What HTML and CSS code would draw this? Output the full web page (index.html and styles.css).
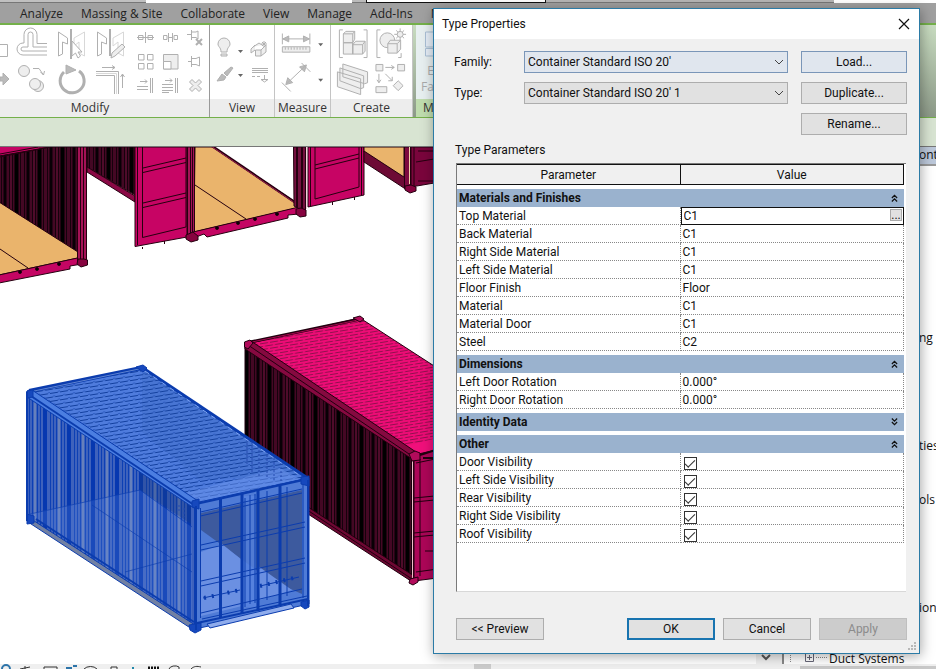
FILE: index.html
```html
<!DOCTYPE html>
<html lang="en">
<head>
<meta charset="utf-8">
<title>Type Properties</title>
<link rel="stylesheet" href="styles.css">
</head>
<body>
<div class="app">
  <div class="titlestrip"><span class="strip-grey"></span><span class="strip-white"></span><span class="strip-tab"></span><span class="strip-box"></span><span class="strip-grey-wide"></span><span class="strip-end"></span></div>
  <nav class="tabs">
    <a href="#">Analyze</a><a href="#">Massing &amp; Site</a><a href="#">Collaborate</a><a href="#">View</a><a href="#">Manage</a><a href="#">Add-Ins</a><a href="#">M</a>
  </nav>
  <div class="ribbon">
    <section class="panel panel-modify">
      <div class="tools modify-tools">
        <svg class="edge" viewBox="0 0 12 72"><path d="M0 19.500H7.500V31.500H0"/><path class="solid" d="M0 52H3V48L9 54L3 60V56H0Z"/></svg>
        <div class="big-grid">
          <svg viewBox="0 0 34 36"><path d="M31 18.500H21V9.500A6.500 6.500 0 0 0 8 9.500V18H7A6 6 0 0 0 7 30H31M31 22H17V9.500A2.500 2.500 0 0 0 12 9.500V22H7A2 2 0 0 0 7 26H31"/></svg>
          <svg viewBox="0 0 34 36"><path d="M3.500 7V31L7.500 29V17L12.500 19V13Z"/><path class="pale" d="M29.500 7V31L24 28V17L19 21V13Z"/><path class="thick" d="M16 4V34"/><path class="paper" d="M17 16V31L20.500 28L23 33L25.500 31L23 27H27Z"/></svg>
          <svg viewBox="0 0 34 36"><path d="M3.500 7V31L7.500 29V17L12.500 19V13Z"/><path class="pale" d="M29.500 7V31L24 28V17L19 21V13Z"/><path class="thick" d="M16 4V31"/><path class="tint" d="M17 33L18 28L28 19L31 22L21 31Z"/></svg>
          <svg viewBox="0 0 34 36"><circle class="tint" cx="8" cy="9" r="5.500"/><circle class="tint" cx="22" cy="24" r="5.500"/><circle class="tint" cx="19" cy="22" r="5.500"/><path d="M17 6.500H23L27.500 13M24.500 10L27.500 13L28.500 9"/></svg>
          <svg viewBox="0 0 34 36"><path class="ring" d="M9 10A12 12 0 1 0 24 9"/><path class="solid" d="M11 3L21 8L11 12Z"/></svg>
          <svg viewBox="0 0 34 36"><path d="M8 5.500H21M18 3.500L21 5.500L18 7.500M2 9.500H24.500V32M2 13.500H20.500V32M28.500 26V12M26.500 15L28.500 12L30.500 15"/><path class="pale" d="M2 11.500H22.500V32"/></svg>
        </div>
        <div class="small-grid">
          <svg viewBox="0 0 18 18"><path d="M1.500 6.500H6V10.500H1.500ZM11 6.500H15.500V10.500H11ZM8.500 3V14M0 8.500H17"/></svg>
          <svg viewBox="0 0 18 18"><path d="M1.500 6.500H5V10.500H1.500ZM12 6.500H15.500V10.500H12ZM6.500 4V13M10.500 4V13M6 8.500H11"/></svg>
          <svg viewBox="0 0 18 18"><path d="M0 5.500H4M4.500 1V11M4.500 3H9L11 2V10L9 8.500H4.500"/><path class="thick" d="M9 10L15 16M15 10L9 16"/></svg>
          <svg viewBox="0 0 18 18"><path d="M1.500 1.500H7V7H1.500ZM10.500 1.500H16V7H10.500ZM1.500 10.500H7V16H1.500ZM10.500 10.500H16V16H10.500Z"/></svg>
          <svg viewBox="0 0 18 18"><path class="tint" d="M1.500 1.500H16V16H1.500Z"/><path class="paper" d="M1.500 8.500H9V16H1.500Z"/></svg>
          <svg viewBox="0 0 18 18"><path d="M1 8.500H4M4.500 3V14M4.500 5.500H9L12.500 4V13L9 11.500H4.500"/></svg>
          <svg viewBox="0 0 18 18"><path d="M3 4.500H10M8 2.500L10 4.500L8 6.500M13.500 1V16M15.500 1V16M0 9.500H11M0 12.500H11"/></svg>
          <svg viewBox="0 0 18 18"><path d="M3 3.500H10M8 1.500L10 3.500L8 5.500M13.500 1V16M15.500 1V16M0 7.500H11M0 10.500H11M0 13.500H11M0 15.500H7"/></svg>
          <svg viewBox="0 0 18 18"><path class="tint" d="M2.500 5L5 2.500L8.500 6L12 2.500L14.500 5L11 8.500L14.500 12L12 14.500L8.500 11L5 14.500L2.500 12L6 8.500Z"/></svg>
        </div>
      </div>
      <h2>Modify</h2>
    </section>
    <section class="panel panel-view">
      <div class="tools">
        <svg class="fill" viewBox="0 0 64 72"><path class="tint" d="M11 27C11 22 8 22 8 19A6 6 0 0 1 20 19C20 22 17 22 17 27ZM11 29H17V31H11Z"/><path class="arrow" d="M28 25H33L30.500 28Z"/><path class="tint" d="M45.500 25V31H51V25ZM45 25L41 28V24L45 20M51 25L56 20V27L51 31M43 22L49 18L52 20"/><path d="M54 16V22M51 19H57M52 17L56 21M56 17L52 21"/><path class="solid" d="M7 56L12 49L16 52L14 55ZM14 48L21 42L23 43L17 51Z"/><path class="arrow" d="M28 49H33L30.500 52Z"/><path d="M42 43.500H58M42 47.500H58M42 45.500H58M42 51.500H45M47 51.500H50M54.500 50V54M51 54.500H58L54.500 57Z"/></svg>
      </div>
      <h2>View</h2>
    </section>
    <section class="panel panel-measure">
      <div class="tools">
        <svg class="fill" viewBox="0 0 56 72"><path d="M8 13.500H35M7.500 8V19M35.500 8V19"/><path class="solid" d="M8 13.500L14 10.500V16.500ZM35 13.500L29 10.500V16.500ZM11 60L13 53L18 58ZM32 40L25 42L30 47Z"/><path class="tint" d="M7.500 21.500H35.500V27H7.500ZM10.500 22V24.500M13.500 22V24.500M16.500 22V24.500M19.500 22V24.500M22.500 22V24.500M25.500 22V24.500M28.500 22V24.500M31.500 22V24.500"/><path class="arrow" d="M44 18H49L46.500 21ZM44 54H49L46.500 57Z"/><path d="M12 59L31 41M7 58L16 67M27 38L36 47"/></svg>
      </div>
      <h2>Measure</h2>
    </section>
    <section class="panel panel-create">
      <div class="tools">
        <svg class="fill" viewBox="0 0 82 72"><path d="M12 4.500H8.500V32.500H12M33 4.500H36.500V32.500H33M50 4.500H46.500V32.500H50M71 28V32.500H68"/><path class="tint" d="M12.500 8.500L15 6H24V14L22 17.500H12.500ZM12.500 17.500H22V29H12.500ZM22 19.500L25 16H34.500V26L32 29H22Z"/><path d="M12.500 8.500H22V29M22 19.500H32V29M22 8.500L24 6M32 19.500L34.500 16"/><circle class="tint" cx="57" cy="15" r="7.500"/><path class="tint" d="M57.500 18.500L60 15H70.500V24L67 28H57.500ZM57.500 18.500H67V28M67 18.500L70.500 15"/><path d="M70 3V15M64 9H76M66 5L74 13M74 5L66 13"/><circle class="tint" cx="70" cy="9" r="3"/><path class="tint" d="M12 39L37 47V58L34 59L12 52ZM9 43L33 51V63L30 64L9 56ZM6.500 47L30 54V70L6.500 62Z"/><path class="tint" d="M45.500 39.500H52.500V46H45.500ZM67.500 39.500H74.500V46H67.500ZM45.500 62H56.500V68H45.500ZM68 56L73 61L68 66L63 61Z"/><path d="M55 42.500H64M61 40.500L64 42.500L61 44.500M48.500 49V58M46.500 55L48.500 58L50.500 55M55 49L62 56M62 52V56H58"/></svg>
      </div>
      <h2>Create</h2>
    </section>
    <section class="panel panel-mode">
      <div class="tools"><svg class="fill" viewBox="0 0 24 72"><path class="bluish" d="M9.500 7H24V22H9.500ZM9.500 23.500H24V31H9.500Z"/></svg><span class="mode-label">E<br>Fa</span></div>
      <h2>M</h2>
    </section>
  </div>
  <div class="optionsbar"></div>

  <div class="workspace">
    <main class="viewport">
      <svg class="model" viewBox="0 147 782 517" preserveAspectRatio="xMinYMin slice" role="img" aria-label="Shipping containers">
        <defs>
          <pattern id="dark" width="23" height="40" patternUnits="userSpaceOnUse"><rect width="23" height="40" fill="#440824"/><path d="M1.500 0V40M9.500 0V40M12.500 0V40M20.500 0V40" stroke="#16020c"/><path d="M5 0V40" stroke="#080005" stroke-width="3"/><path d="M16.500 0V40" stroke="#000" stroke-width="4"/><path d="M11 0V40" stroke="#571030"/></pattern>
          <pattern id="bluewall" width="24" height="40" patternUnits="userSpaceOnUse"><rect width="24" height="40" fill="#3e62bc"/><path d="M2.500 0V40M5.500 0V40M8.500 0V40M13.500 0V40M16.500 0V40" stroke="#0c3fb4"/><path d="M21 0V40" stroke="#0638b0" stroke-width="4"/><path d="M11 0V40" stroke="#6680bb" stroke-width="2"/></pattern>
          <pattern id="blueroof" width="10" height="8" patternUnits="userSpaceOnUse" patternTransform="matrix(1 -.16 0 1 0 0)"><rect width="10" height="8" fill="#4f7cdd"/><path d="M0 1.500H8M0 5.500H3M5 5.500H10" stroke="#123f9e"/><path d="M8 .5H10M3 4.500H5" stroke="#2a59c1"/></pattern>
          <pattern id="pinkroof" width="10" height="6" patternUnits="userSpaceOnUse" patternTransform="matrix(1 -.16 0 1 0 0)"><rect width="10" height="6" fill="#ee0c76"/><path d="M0 1.500H8M0 4.500H3M5 4.500H10" stroke="#92104e"/></pattern>
        </defs>
        <!-- open containers along the top edge -->
        <g stroke="#25000f" stroke-width="1">
          <path fill="#c40563" d="M-1 147H78V160L-1 157Z"/>
          <path fill="url(#dark)" d="M-1 156L50 147H78V254L-1 202Z"/>
          <path fill="#c40563" stroke="none" d="M0 147H40L0 155Z"/><path d="M0 154L38 147M0 157L50 147" fill="none"/>
          <path fill="#eab46c" d="M-1 202L78 252V258L-1 275Z"/><path d="M0 249L28 268" fill="none"/>
          <path fill="#c40563" d="M-1 275L82 257V264L70 266V269L-1 283Z"/>
          <path fill="#a51256" d="M77.500 147H86.500V262H77.500Z"/><path d="M80.500 147V262M83.500 147V262"/>
          <path fill="#86033f" d="M78 259H84L87.500 260V265L81 267L77 264Z"/>
          <circle cx="20" cy="272" r="1.500"/><circle cx="37" cy="269" r="1.500"/><circle cx="59" cy="264" r="1.500"/>
          <path fill="url(#dark)" d="M87 147H135V195L87 167Z"/><path fill="#8a0945" d="M87 167L135 196V202L87 172Z"/>
          <path fill="#c70464" d="M135 147H187V237L135 246.500Z"/><path fill="none" d="M137.500 147V245M142.500 147V237.500L186 227V147M143 168L186 158M143 172.500L186 162.500M143 203L186 193M143 207.500L186 197.500M142.500 247V249M164.500 241V244"/>
          <path fill="#eab46c" d="M195 147H213L297 203V208L194 232Z"/><path d="M195 185L246 219" fill="none"/>
          <path stroke-width="2.500" d="M212 146L296 203" fill="none"/><path d="M211 146L295 203" fill="none" stroke="#9a1b4d"/>
          <path fill="#a51256" d="M187.500 147H194.500V235H187.500Z"/><path d="M190.500 147V235M192.500 147V235"/>
          <path fill="#c40563" d="M193 232L299 207V214L288 215V218L207 237L204 234L196 237Z"/>
          <circle cx="217" cy="228" r="1.500"/><circle cx="238" cy="223" r="1.500"/><circle cx="255" cy="219" r="1.500"/><circle cx="277" cy="214" r="1.500"/>
          <path fill="#86033f" d="M186 235L193 232L198 236V240L191 242L186 239Z"/>
          <path fill="#751040" d="M293.500 147H305.500V212L294 206Z"/><path stroke-width="2" d="M297 147V208M302 147V211"/><path stroke="#f3cdd9" d="M306.500 147V209"/>
          <path fill="#86033f" d="M296 209L301 208L306 210V216L300 217L296 214Z"/>
          <path fill="#c70464" d="M308 147H364V195L308 207Z"/><path fill="none" d="M310.500 147V206M315 147V199L359 187V147M315 165L359 154M315 169L359 158M332.500 202V205M354.500 197V200"/><path d="M361.500 147V195"/>
          <path fill="#eab46c" d="M364 147H404V178L364 152Z"/><path fill="#6d0a35" d="M364 151L407 179V190L364 162Z"/>
          <path fill="#7d0a40" d="M404.500 147H410.500V188H404.500Z"/><path fill="#7a053c" d="M411 147H440V182L411 187Z"/><path d="M414 147V186M418 151H440M416 162L440 158M418 181H440" fill="none"/><path stroke="#efd1a7" d="M409.500 147V184"/>
          <path fill="#86033f" d="M405 186L411 185L416 187V191L410 193L405 190Z"/>
        </g>
        <!-- closed container -->
        <g stroke="#21000f">
          <path fill="url(#pinkroof)" d="M246 344L360 318L445 373V454L414 455Z"/>
          <path fill="#f0107b" stroke="none" d="M402 447L445 436V452L414 455Z"/>
          <path fill="none" stroke-width="3" d="M250 342L360 319"/><path fill="none" stroke="#a60850" d="M252 342L358 320"/>
          <path fill="url(#dark)" d="M245 345L414 456V581L245 472Z"/>
          <path fill="#860940" d="M245 343L251 341L416 452V459L412 459L245 349Z"/><path fill="none" d="M248 345L412 456"/>
          <path fill="#6d0732" d="M245 466L414 576V583L245 473Z"/><path fill="none" d="M245 469L412 579"/>
          <path fill="#ad0658" d="M414 455L445 448V577L414 581Z"/><path fill="none" d="M420 459V576M416 463L445 457M414 498L445 495M414 502L445 499M414 533L445 530M414 537L445 534M425 551H445M416 572L445 568"/>
          <path stroke="#efbdca" d="M412.500 460V578"/>
          <path fill="#b20b5b" d="M409 454L415 451L420 453V460L412 461ZM410 579L418 577V582L413 585L409 583ZM244.500 342L250 340L253 343L248 349L244.500 347ZM353 318L360 316L364 319L360 322Z"/>
          <path fill="none" d="M420 455L445 447M423 458H445" stroke-width="2"/>
        </g>
        <!-- selected container -->
        <g stroke="#0b3cae" stroke-linejoin="round">
          <path fill="url(#blueroof)" d="M28 391L142 368L308 478L195 504Z"/>
          <path fill="#244f9f" fill-opacity=".16" stroke="none" d="M142 368V432L200 480L300 475Z"/>
          <path fill="#6e96ed" fill-opacity=".5" stroke="none" d="M182 494L280 468L300 479L195 503Z"/>
          <path fill="none" stroke-width="4" d="M29 391L141 368"/><path fill="none" stroke="#5f84d1" d="M34 391L139 369"/>
          <path fill="url(#bluewall)" d="M27 393L196 504V629L27 520Z"/>
          <path fill="#193b80" fill-opacity=".35" stroke="none" d="M140 469L191 504V524L140 490Z"/>
          <path fill="#7097ea" fill-opacity=".2" stroke="none" d="M28 514L140 490L192 527V626Z"/>
          <path fill="none" stroke-opacity=".65" d="M30 514L140 490L192 527M92 505L192 572M125 572L192 554"/>
          <path fill="#4b7ee1" d="M27 391L32 390L198 501V507L194 508L27 397Z"/><path fill="none" stroke-width="2" d="M28 394L194 505"/>
          <path fill="#7180a3" d="M28 517L195 625V631L28 522Z"/><path fill="none" stroke-width="2" d="M36 519L194 622"/>
          <path fill="#4f7bd6" d="M195 503L309 478V604L195 629Z"/>
          <path fill="#3d5a9e" stroke="none" d="M201 513L302 490V594L270 580L201 530Z"/>
          <path fill="#6b90e2" stroke="none" d="M201 552L222 544L242 560V606L201 616ZM258 566L292 590L260 600Z"/>
          <path fill="#5683e0" stroke="none" fill-opacity=".8" d="M241 496H256V607H241Z"/>
          <path fill="none" d="M200.500 512L302 489M200.500 516L302 493M201 545L305 522M201 550L305 527M201 581L305 558M201 586L305 563M201 613L302 589M202 619L307 596M203 598L240 590M260 586L299 577M245 498V607M250 495V604M255 494V603M267 491V600M287 487V596M303 485V598M200.500 508V618"/>
          <path fill="none" stroke-width="3" d="M220.500 498V618M242 493V614M258 490V611M280 486V606"/>
          <path fill="none" stroke-width="4" stroke-dasharray="2 6" d="M204 598L240 590M260 586L298 577"/>
          <path fill="none" stroke-width="2" d="M196 504L308 479M197 623L308 599"/><path fill="#8facec" d="M207 624L291 604L294 608L210 628Z"/>
          <path fill="none" stroke="#244bb0" stroke-dasharray="2 2" d="M247 439V464M252 442V474M259 446V477M267 451V479M274 458V482M281 463V484M179 505V512M184 508V517"/>
          <path fill="none" stroke-width="3" d="M143 368L306 477"/>
          <path fill="none" stroke="#7fa5f4" stroke-width="1" stroke-dasharray="5 5" d="M145 371L302 477"/>
          <path fill="#1648bd" d="M192 501L199 499V509L192 507ZM301 477L309 476V486L301 484ZM27 391L33 390V397L27 398ZM136 367L143 365L147 368L143 372ZM27 514L34 516V523L27 524ZM189 625L201 623V630L195 633L190 630ZM301 602L309 600V607L305 609L301 606Z"/>
          <path fill="none" stroke-width="2" d="M196 506V630M308 480V606M27 392V521"/>
        </g>
      </svg>
      <div class="viewscroll"><svg viewBox="0 0 10 8"><path d="M1 1L5 5L9 1" fill="none" stroke="#555" stroke-width="2"/></svg></div>
    </main>
    <aside class="browser">
      <h2 class="browser-head">ont</h2>
      <div class="tree">
        <ul class="leaves"><li>ng</li><li>ties</li><li>ols</li><li>ion</li></ul>
        <div class="branch"><svg viewBox="0 0 40 12"><path d="M1.500 0V12M20.500 0V2M27 6.500H38" stroke="#888" stroke-dasharray="1 1" fill="none"/><path d="M16.500 2.500H24.500V10.500H16.500ZM18 6.500H23M20.500 4V9" fill="none" stroke="#667"/></svg><span>Duct Systems</span></div>
      </div>
    </aside>
  </div>
  <div class="viewbar">
    <svg viewBox="0 0 210 5" fill="none"><path d="M2 5A4 4 0 0 1 10 5M66 4H72M73 2H77" stroke="#2d74a9" stroke-width="2"/><path d="M20 5L30 3M25 2V5M44 5V3H57V5M84 5A8 6 0 0 1 97 5M111 5V3H117V5M169 5A6 4 0 0 1 179 3V5M191 5C194 2 197 2 201 3" stroke="#333"/><path d="M148 4H159" stroke="#111" stroke-width="3" stroke-dasharray="2 1"/><path d="M133 3V5" stroke="#28a" stroke-width="2"/></svg>
    <span class="thumb"></span>
    <span class="treescroll"></span>
  </div>
</div>

<form class="dialog" role="dialog" aria-labelledby="dlg-title">
  <header class="dlg-head"><h1 id="dlg-title">Type Properties</h1><button type="button" class="close" aria-label="Close"><svg viewBox="0 0 12 12"><path d="M1 1L11 11M11 1L1 11" stroke="#111" stroke-width="1.200"/></svg></button></header>
  <div class="dlg-body">
    <div class="fields">
      <label for="family">Family:</label>
      <div class="combo"><select id="family" class="hot"><option>Container Standard ISO 20'</option></select><svg viewBox="0 0 10 6"><path d="M1 1L5 5L9 1" fill="none" stroke="#444"/></svg></div>
      <button type="button" class="btn hot">Load...</button>
      <label for="type">Type:</label>
      <div class="combo"><select id="type"><option>Container Standard ISO 20' 1</option></select><svg viewBox="0 0 10 6"><path d="M1 1L5 5L9 1" fill="none" stroke="#444"/></svg></div>
      <button type="button" class="btn">Duplicate...</button>
      <button type="button" class="btn rename">Rename...</button>
    </div>
    <h2 class="caption" id="params">Type Parameters</h2>
    <div class="frame">
      <table aria-labelledby="params">
        <thead><tr><th scope="col">Parameter</th><th scope="col">Value</th></tr></thead>
        <tbody>
          <tr class="group"><th colspan="2" scope="rowgroup"><div>Materials and Finishes<svg viewBox="0 0 8 8"><path d="M1 4L4 1L7 4M1 8L4 5L7 8"/></svg></div></th></tr>
          <tr><td><label for="top-material">Top Material</label></td><td class="editing"><div><input id="top-material" type="text" value="C1"><button type="button" aria-label="Browse">...</button></div></td></tr>
          <tr><td>Back Material</td><td>C1</td></tr>
          <tr><td>Right Side Material</td><td>C1</td></tr>
          <tr><td>Left Side Material</td><td>C1</td></tr>
          <tr><td>Floor Finish</td><td>Floor</td></tr>
          <tr><td>Material</td><td>C1</td></tr>
          <tr><td>Material Door</td><td>C1</td></tr>
          <tr><td>Steel</td><td>C2</td></tr>
        </tbody>
        <tbody>
          <tr class="group"><th colspan="2" scope="rowgroup"><div>Dimensions<svg viewBox="0 0 8 8"><path d="M1 4L4 1L7 4M1 8L4 5L7 8"/></svg></div></th></tr>
          <tr><td>Left Door Rotation</td><td>0.000°</td></tr>
          <tr><td>Right Door Rotation</td><td>0.000°</td></tr>
        </tbody>
        <tbody>
          <tr class="group"><th colspan="2" scope="rowgroup"><div>Identity Data<svg viewBox="0 0 8 8"><path d="M1 0L4 3L7 0M1 4L4 7L7 4"/></svg></div></th></tr>
        </tbody>
        <tbody>
          <tr class="group"><th colspan="2" scope="rowgroup"><div>Other<svg viewBox="0 0 8 8"><path d="M1 4L4 1L7 4M1 8L4 5L7 8"/></svg></div></th></tr>
          <tr><td><label for="v1">Door Visibility</label></td><td><input type="checkbox" id="v1" checked></td></tr>
          <tr><td><label for="v2">Left Side Visibility</label></td><td><input type="checkbox" id="v2" checked></td></tr>
          <tr><td><label for="v3">Rear Visibility</label></td><td><input type="checkbox" id="v3" checked></td></tr>
          <tr><td><label for="v4">Right Side Visibility</label></td><td><input type="checkbox" id="v4" checked></td></tr>
          <tr><td><label for="v5">Roof Visibility</label></td><td><input type="checkbox" id="v5" checked></td></tr>
        </tbody>
      </table>
    </div>
    <footer class="actions">
      <button type="button" class="btn preview">&lt;&lt; Preview</button>
      <button type="button" class="btn ok">OK</button>
      <button type="button" class="btn">Cancel</button>
      <button type="button" class="btn" disabled>Apply</button>
    </footer>
  </div>
  <svg class="grip" viewBox="0 0 9 9"><path d="M6 0H8V2H6ZM3 3H5V5H3ZM6 3H8V5H6ZM0 6H2V8H0ZM3 6H5V8H3ZM6 6H8V8H6Z" fill="#b8b8b8"/></svg>
</form>
</body>
</html>
```
FILE: styles.css
```css
* { box-sizing: border-box; }
body { margin: 0; font: 12px/16px "Open Sans", "Noto Sans", sans-serif; color: #111; overflow: hidden; }
h1, h2, ul { margin: 0; padding: 0; font-size: inherit; font-weight: normal; list-style: none; }
button, input, select { font: inherit; color: inherit; margin: 0; }
svg { display: block; }

.app { display: flex; flex-direction: column; height: 100vh; }

/* window top and ribbon tabs */
.titlestrip { display: flex; flex: none; height: 3px; background: #fff; }
.strip-grey { width: 146px; background: #c0c0c0; border-bottom: 1px solid #777; }
.strip-white { width: 206px; }
.strip-tab { width: 14px; background: #bbb; border-bottom: 1px solid #777; }
.strip-box { width: 180px; border: solid #111; border-width: 0 1px 1px; }
.strip-grey-wide { width: 288px; background: #b5b5b5; border-bottom: 1px solid #777; }
.tabs { display: flex; flex: none; gap: 18px; height: 20px; padding: 3px 20px 0; background: #a0a0a0; }
.tabs a { color: #222; text-decoration: none; white-space: nowrap; }

.ribbon { display: flex; flex: none; height: 95px; border: solid #74b04a; border-width: 2px 0 1px; background: linear-gradient(#c8dcc0, #8c9988); }
.panel { display: flex; flex-direction: column; border-right: 1px solid #c4c4c4; background: #fff; }
.panel h2 { height: 18px; background: #ededed; text-align: center; color: #333; line-height: 18px; }
.tools { display: flex; flex: 1; min-height: 0; }
.panel-modify { width: 210px; padding-right: 0; border-color: #999; }
.panel-modify h2 { padding-right: 29px; }
.panel-view { width: 65px; }
.panel-measure { width: 56px; }
.panel-create { width: 82px; }
.panel-mode { width: 300px; margin-left: 3px; background: #e7eff0; }
.panel-mode h2 { background: #bfdcae; text-align: left; padding-left: 7px; }
.panel-mode .fill { width: 24px; }
.mode-label { margin: 38px 0 0 -19px; color: #aaa; text-align: right; }
.ribbon svg { fill: none; stroke: #b0b0b0; stroke-width: 1; }
.ribbon .solid { fill: #bbb; }
.ribbon .tint { fill: #eee; }
.ribbon .paper { fill: #fff; }
.ribbon .pale { stroke: #d8d8d8; fill: none; }
.ribbon .thick { stroke-width: 2; }
.ribbon .ring { stroke-width: 3; }
.ribbon .arrow { fill: #666; stroke: none; }
.ribbon .bluish { fill: #e4edf6; stroke: #a9bfd4; }
.edge { width: 12px; height: 72px; }
.fill { width: 100%; height: 72px; }
.big-grid { display: grid; grid-template-columns: repeat(3, 34px); gap: 0 5px; padding-left: 4px; }
.big-grid svg { width: 34px; height: 36px; }
.small-grid { display: grid; grid-template-columns: repeat(3, 18px); grid-auto-rows: 18px; gap: 6px 7px; padding: 4px 0 0 9px; }
.optionsbar { flex: none; height: 29px; background: #d8e4d2; border-bottom: 1px solid #777; }

/* model view */
.workspace { display: flex; flex: 1; min-height: 0; }
.viewport { position: relative; flex: 1; min-width: 0; background: #fff; overflow: hidden; }
.model { width: 100%; height: 100%; }
.viewscroll { position: absolute; right: 0; bottom: 0; width: 26px; height: 12px; padding: 2px 5px; background: #f0f0f0; }
.viewscroll svg { width: 10px; height: 8px; }

.browser { display: flex; flex-direction: column; width: 154px; border-left: 2px solid #888; background: #fff; }
.browser-head { height: 19px; background: #bcc8da; border-bottom: 2px solid #999; text-align: left; padding-left: 135px; }
.tree { display: flex; flex-direction: column; flex: 1; min-height: 0; }
.leaves { display: grid; grid-template-rows: 108px 54px 108px; align-items: start; padding: 164px 0 0 135px; }
.branch { display: flex; align-items: flex-start; gap: 0; margin-top: auto; height: 13px; overflow: hidden; padding-left: 5px; }
.branch svg { width: 40px; height: 12px; flex: none; }
.branch span { white-space: nowrap; }

.viewbar { display: flex; flex: none; height: 5px; background: #efefef; overflow: hidden; }
.viewbar svg { width: 210px; height: 5px; }
.thumb { width: 17px; margin-left: 264px; background: #ccc; }
.treescroll { width: 136px; height: 3px; margin: 2px 0 0 auto; background: #c8c8c8; }

/* dialog */
.dialog { position: absolute; top: 8px; right: 16px; width: 487px; border: 1px solid #2b7ba6; background: #f0f0f0; box-shadow: 1px 2px 12px rgba(0, 0, 0, .35); font-family: Roboto, "Open Sans", sans-serif; }
.dlg-head { display: flex; align-items: center; justify-content: space-between; height: 30px; padding: 0 9px 0 8px; background: #fff; }
.close { width: 12px; height: 12px; padding: 0; border: 0; background: none; }
.dlg-body { padding: 12px 12px 13px 20px; }
.fields { display: grid; grid-template-columns: 70px 1fr 106px; grid-auto-rows: 22px; row-gap: 9px; align-items: center; }
.combo { position: relative; height: 22px; margin-right: 13px; }
.combo select { width: 100%; height: 22px; padding: 0 3px; border: 1px solid #adadad; border-radius: 0; background: #e1e1e1; appearance: none; }
.combo svg { position: absolute; right: 4px; top: 8px; width: 10px; height: 6px; }
.btn { height: 22px; padding: 0; border: 1px solid #adadad; background: #e1e1e1; text-align: center; line-height: 20px; }
.fields .hot { border-color: #7a96b8; background: #e0e6ee; }
.rename { grid-column: 3; }
.caption { margin: 7px 0 5px 1px; }
.frame { height: 429px; margin: 0 1px 0 2px; border: solid #7a7a7a; border-width: 1px 0 0 1px; border-bottom: 1px solid #d8d8d8; background: #fff; padding-right: 2px; }
table { width: 100%; border-collapse: separate; border-spacing: 0; table-layout: fixed; }
thead th { height: 21px; padding: 0; border: solid #111; border-width: 1px 1px 1px 0; background: #f0f0f0; font-weight: normal; }
thead th:first-child { width: calc(50% - 1px); }
tbody td { height: 18px; padding: 0 2px; border: dotted #888; border-width: 0 1px 1px 0; line-height: 16px; }
.group th { padding: 4px 0 0; text-align: left; font-weight: bold; }
.group div { display: flex; align-items: center; justify-content: space-between; height: 18px; padding: 0 6px 0 2px; background: #9ab2ce; }
.group svg { width: 7px; height: 8px; fill: none; stroke: #111; stroke-width: 1.4; }
tbody td.editing { padding: 0; border: 1px solid #111; }
.editing div { display: flex; height: 16px; }
.editing input { flex: 1; min-width: 0; padding: 0 2px; border: 0; background: #fff; outline: 0; }
.editing button { width: 12px; height: 12px; margin: 1px; padding: 0; border: 1px solid #aaa; background: #e1e1e1; line-height: 6px; }
input[type="checkbox"] { display: grid; place-items: center; width: 13px; height: 13px; margin: 3px 0 0 1px; appearance: none; border: 1px solid #333; background: #fff; }
input[type="checkbox"]:checked::after { content: ""; width: 9px; height: 4px; border: solid #333; border-width: 0 0 1px 1px; transform: translateY(-1px) rotate(-45deg); }
.actions { display: grid; grid-template-columns: 88px 1fr 88px 88px; gap: 8px; margin: 26px 0 0 2px; }
.ok { justify-self: end; width: 88px; border: 2px solid #1874b0; line-height: 18px; }
.btn:disabled { border-color: #bfbfbf; background: #ccc; color: #8b8b8b; }
.grip { position: absolute; right: 2px; bottom: 2px; width: 9px; height: 9px; }
```
